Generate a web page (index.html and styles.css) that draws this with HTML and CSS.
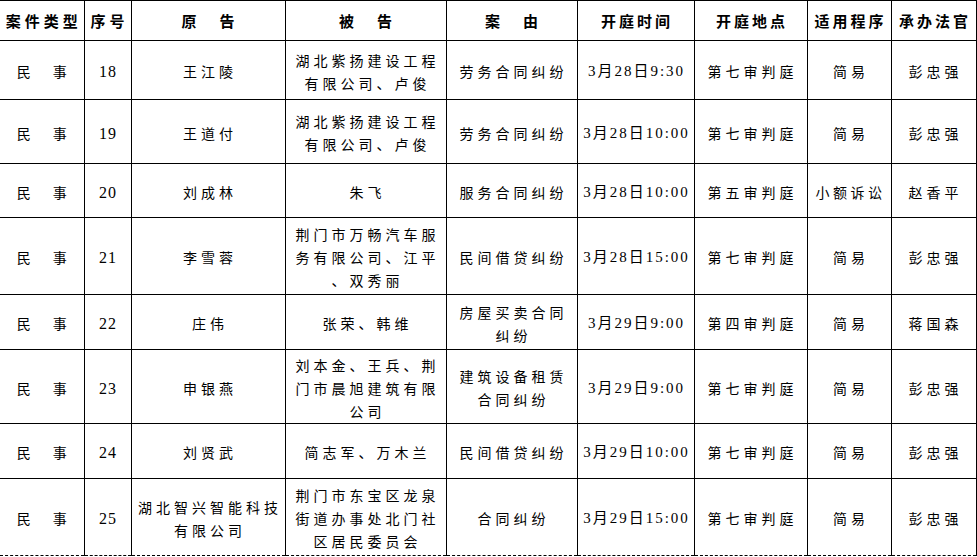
FILE: index.html
```html
<!DOCTYPE html>
<html lang="zh-CN">
<head>
<meta charset="utf-8">
<title>开庭公告</title>
<link rel="stylesheet" href="styles.css">
</head>
<body>
<table class="sched">
  <colgroup>
    <col class="c-type"><col class="c-no"><col class="c-pl"><col class="c-df"><col class="c-cause"><col class="c-time"><col class="c-place"><col class="c-proc"><col class="c-judge">
  </colgroup>
  <thead>
    <tr class="r-head">
      <th class="first">案件类型</th>
      <th>序号</th>
      <th>原　告</th>
      <th>被　告</th>
      <th>案　由</th>
      <th class="tight">开庭时间</th>
      <th class="tight">开庭地点</th>
      <th class="tight">适用程序</th>
      <th class="tight">承办法官</th>
    </tr>
  </thead>
  <tbody>
    <tr class="r-18">
      <td class="first">民　事</td><td class="num">18</td><td>王江陵</td>
      <td>湖北紫扬建设工程<br>有限公司、卢俊</td><td>劳务合同纠纷</td>
      <td class="time">3月28日9:30</td><td>第七审判庭</td><td>简易</td><td>彭忠强</td>
    </tr>
    <tr class="r-19">
      <td class="first">民　事</td><td class="num">19</td><td>王道付</td>
      <td>湖北紫扬建设工程<br>有限公司、卢俊</td><td>劳务合同纠纷</td>
      <td class="time">3月28日10:00</td><td>第七审判庭</td><td>简易</td><td>彭忠强</td>
    </tr>
    <tr class="r-20">
      <td class="first">民　事</td><td class="num">20</td><td>刘成林</td>
      <td>朱飞</td><td>服务合同纠纷</td>
      <td class="time">3月28日10:00</td><td>第五审判庭</td><td class="nw">小额诉讼</td><td>赵香平</td>
    </tr>
    <tr class="r-21">
      <td class="first">民　事</td><td class="num">21</td><td>李雪蓉</td>
      <td>荆门市万畅汽车服<br>务有限公司、江平<br>、双秀丽</td><td>民间借贷纠纷</td>
      <td class="time">3月28日15:00</td><td>第七审判庭</td><td>简易</td><td>彭忠强</td>
    </tr>
    <tr class="r-22">
      <td class="first">民　事</td><td class="num">22</td><td>庄伟</td>
      <td>张荣、韩维</td><td>房屋买卖合同<br>纠纷</td>
      <td class="time">3月29日9:00</td><td>第四审判庭</td><td>简易</td><td>蒋国森</td>
    </tr>
    <tr class="r-23">
      <td class="first">民　事</td><td class="num">23</td><td>申银燕</td>
      <td>刘本金、王兵、荆<br>门市晨旭建筑有限<br>公司</td><td>建筑设备租赁<br>合同纠纷</td>
      <td class="time">3月29日9:00</td><td>第七审判庭</td><td>简易</td><td>彭忠强</td>
    </tr>
    <tr class="r-24">
      <td class="first">民　事</td><td class="num">24</td><td>刘贤武</td>
      <td>简志军、万木兰</td><td>民间借贷纠纷</td>
      <td class="time">3月29日10:00</td><td>第七审判庭</td><td>简易</td><td>彭忠强</td>
    </tr>
    <tr class="r-25 last">
      <td class="first">民　事</td><td class="num">25</td><td>湖北智兴智能科技<br>有限公司</td>
      <td>荆门市东宝区龙泉<br>街道办事处北门社<br>区居民委员会</td><td>合同纠纷</td>
      <td class="time">3月29日15:00</td><td>第七审判庭</td><td>简易</td><td>彭忠强</td>
    </tr>
  </tbody>
</table>
</body>
</html>
```

FILE: styles.css
```css
html, body {
  margin: 0;
  padding: 0;
  background: #ffffff;
}

body {
  font-family: "Noto Sans CJK SC", "Noto Sans", sans-serif;
  color: #000000;
  overflow: hidden;
}

.sched {
  border-collapse: collapse;
  table-layout: fixed;
  width: 976px;
  margin: 0;
}

.c-type { width: 84px; }
.c-no { width: 47px; }
.c-pl { width: 154px; }
.c-df { width: 161px; }
.c-cause { width: 131px; }
.c-time { width: 117px; }
.c-place { width: 113px; }
.c-proc { width: 84px; }
.c-judge { width: 85px; }

.sched th,
.sched td {
  border: 1px solid #000000;
  padding: 0 0 0 4px;
  text-align: center;
  vertical-align: middle;
  white-space: nowrap;
  overflow: hidden;
}

.sched th.first,
.sched td.first {
  border-left: none;
}

.sched th {
  font-size: 15px;
  font-weight: 700;
  letter-spacing: 4px;
  line-height: 20px;
}

.sched th.tight {
  letter-spacing: 3px;
  padding-left: 3px;
}

.sched td {
  font-size: 14px;
  font-weight: 400;
  letter-spacing: 4px;
  line-height: 23px;
  padding-top: 3px;
}

.sched td.num {
  font-family: "Liberation Serif", "Noto Sans CJK SC", serif;
  font-size: 16px;
  letter-spacing: 1px;
  padding-left: 1px;
}

.sched td.time {
  font-family: "Liberation Serif", "Noto Sans CJK SC", serif;
  font-size: 15px;
  letter-spacing: 2px;
  padding-left: 2px;
}

.sched td.nw {
  letter-spacing: 3.5px;
  padding-left: 3px;
}

.r-head { height: 40px; }
.r-18 { height: 59px; }
.r-19 { height: 64px; }
.r-20 { height: 54px; }
.r-21 { height: 77px; }
.r-22 { height: 55px; }
.r-23 { height: 74px; }
.r-24 { height: 55px; }
.r-25 { height: 77px; }

.sched tr.last td {
  border-bottom: 1px dashed #000000;
}
```
